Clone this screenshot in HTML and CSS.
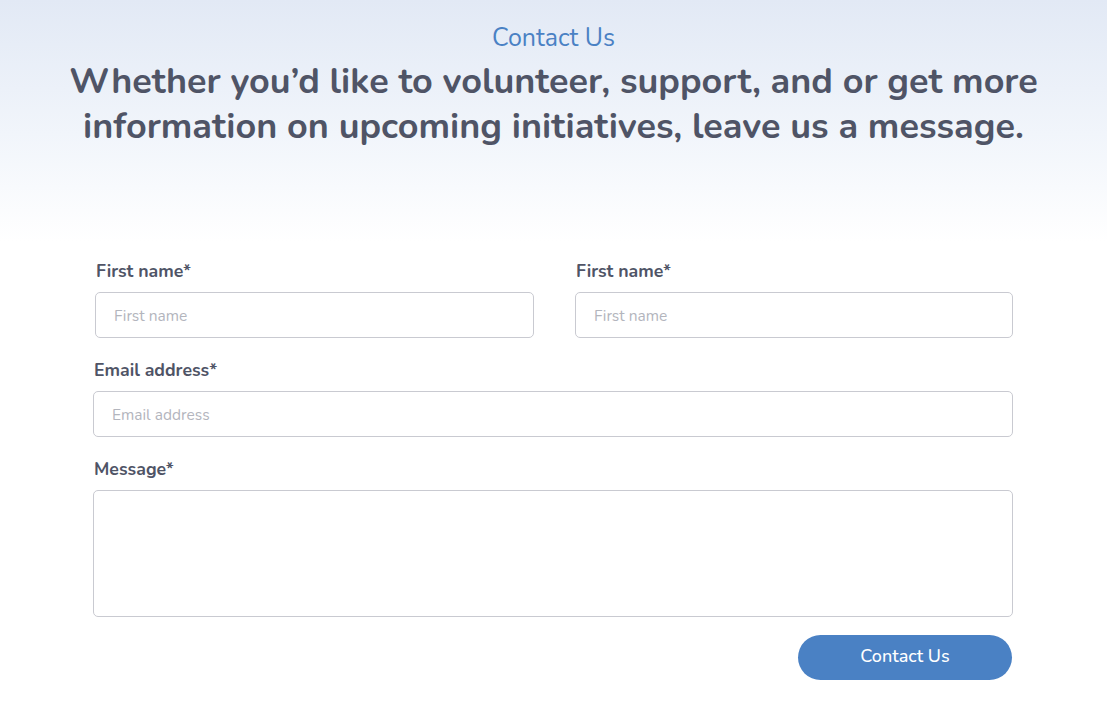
FILE: index.html
```html
<!DOCTYPE html>
<html lang="en">
<head>
<meta charset="utf-8">
<title>Contact Us</title>
<link rel="stylesheet" href="styles.css">
</head>
<body>
<section class="hero">
  <p class="eyebrow">Contact Us</p>
  <h1 class="headline">Whether you’d like to volunteer, support, and or get more information on upcoming initiatives, leave us a message.</h1>
</section>
<form class="form">
  <div class="row row-two">
    <div class="field">
      <label class="label" for="fn1">First name*</label>
      <input class="input" id="fn1" type="text" placeholder="First name">
    </div>
    <div class="field">
      <label class="label" for="fn2">First name*</label>
      <input class="input" id="fn2" type="text" placeholder="First name">
    </div>
  </div>
  <div class="field">
    <label class="label" for="em">Email address*</label>
    <input class="input" id="em" type="email" placeholder="Email address">
  </div>
  <div class="field">
    <label class="label" for="msg">Message*</label>
    <textarea class="input textarea" id="msg"></textarea>
  </div>
  <div class="actions">
    <button class="button" type="button">Contact Us</button>
  </div>
</form>
</body>
</html>
```
FILE: styles.css
```css
* { box-sizing: border-box; }
html, body { margin: 0; padding: 0; }
body {
  background: #ffffff;
  font-family: "Nunito", "Open Sans", "Noto Sans", sans-serif;
  color: #4f5466;
  width: 1107px;
}
.hero {
  background: linear-gradient(180deg, #e2e9f5 0%, #f1f5fb 55%, #ffffff 100%);
  height: 242px;
  padding-top: 22px;
  text-align: center;
}
.eyebrow {
  margin: 0;
  color: #4a81c4;
  font-size: 25px;
  line-height: 32px;
  font-weight: 400;
}
.headline {
  margin: 5px auto 0;
  width: 1020px;
  font-size: 36px;
  line-height: 45px;
  font-weight: 700;
  color: #4f5466;
}
.form {
  margin: 0 0 0 93px;
  width: 920px;
  padding-top: 17px;
  display: flex;
  flex-direction: column;
  gap: 20px;
}
.row-two {
  display: grid;
  grid-template-columns: 439px 438px;
  gap: 41px;
  margin-left: 2px;
}
.field {
  display: flex;
  flex-direction: column;
  gap: 11px;
}
.label {
  font-size: 17.7px;
  line-height: 20px;
  padding-top: 2px;
  font-weight: 700;
  color: #4f5466;
  padding-left: 1px;
}
.input {
  display: block;
  width: 100%;
  height: 46px;
  border: 1px solid #c9cad1;
  border-radius: 5px;
  padding: 0 18px;
  font-family: inherit;
  font-size: 15.5px;
  color: #4f5466;
  background: #fff;
  outline: none;
}
.input::placeholder { color: #b3b5bd; }
.textarea {
  height: 127px;
  resize: none;
  padding: 12px 18px;
}
.actions {
  display: flex;
  justify-content: flex-end;
  margin-top: -2px;
  padding-right: 1px;
}
.button {
  width: 214px;
  height: 45px;
  border: none;
  border-radius: 23px;
  background: #4a81c4;
  color: #ffffff;
  font-family: inherit;
  font-size: 18px;
  font-weight: 500;
  padding: 0 0 3px;
  cursor: pointer;
}
```
